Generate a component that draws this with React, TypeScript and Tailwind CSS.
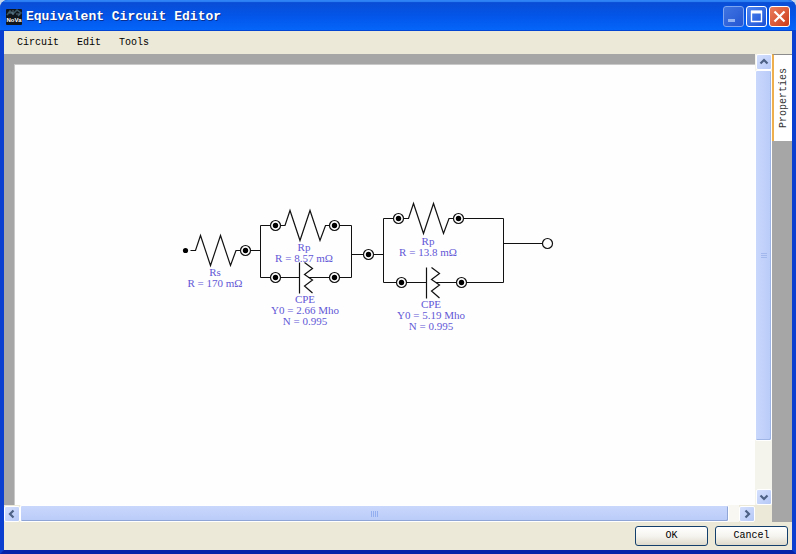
import type { ReactNode } from "react";

const ink = "#111111";

type Point = { x: number; y: number };

function Terminal({ x, y }: Point) {
  return (
    <g>
      <circle cx={x} cy={y} r={5} fill="#ffffff" stroke={ink} strokeWidth={1.2} />
      <circle cx={x} cy={y} r={2.7} fill="#000000" />
    </g>
  );
}

function Resistor({ x, y }: Point) {
  return (
    <path
      d={`M${x - 5} ${y}h5l5 -15l10 30l10 -30l10 30l5.5 -15h5`}
      fill="none"
      stroke={ink}
      strokeWidth={1.2}
    />
  );
}

function PhaseElement({ x, y }: Point) {
  return (
    <g fill="none" stroke={ink}>
      <path d={`M${x} ${y - 15}v31`} strokeWidth={1.2} />
      <path d={`M${x + 5} ${y - 15}l8 6l-8 6l8 5.5l-8 6l8 7`} strokeWidth={1.2} />
    </g>
  );
}

function Label({ x, y, lines }: Point & { lines: string[] }) {
  return (
    <text
      textAnchor="middle"
      fill="#6257d6"
      className="text-[11px] [font-family:'Liberation_Serif',serif]"
    >
      {lines.map((line, i) => (
        <tspan key={line} x={x} y={y + i * 11}>
          {line}
        </tspan>
      ))}
    </text>
  );
}

function CircuitDiagram() {
  return (
    <svg
      width="740"
      height="440"
      viewBox="15 65 740 440"
      role="img"
      aria-label="Equivalent circuit"
      className="block shrink-0"
    >
      <path
        d="M245.5 250.5H260.5M275.5 225.5H260.5V277.5H299.5M334.5 225.5H351.5V277.5H308M351.5 254.5H383.5M398.5 218.5H383.5V282.5H426.5M458.5 218.5H503.5V282.5H436M503.5 243.5H542"
        fill="none"
        stroke={ink}
        strokeWidth={1}
      />
      <circle cx={185.5} cy={250.5} r={2.6} fill="#000000" />
      <Label x={215} y={276} lines={["Rs", "R = 170 mΩ"]} />
      <Label x={304} y={251} lines={["Rp", "R = 8.57 mΩ"]} />
      <Label x={305} y={303} lines={["CPE", "Y0 = 2.66 Mho", "N = 0.995"]} />
      <Label x={428} y={245} lines={["Rp", "R = 13.8 mΩ"]} />
      <Label x={431} y={308} lines={["CPE", "Y0 = 5.19 Mho", "N = 0.995"]} />
      <Resistor x={195.5} y={250.5} />
      <Resistor x={285} y={225.5} />
      <Resistor x={408.5} y={218.5} />
      <PhaseElement x={299.5} y={277.5} />
      <PhaseElement x={426.5} y={282.5} />
      <Terminal x={245.5} y={250.5} />
      <Terminal x={275.5} y={225.5} />
      <Terminal x={334.5} y={225.5} />
      <Terminal x={275.5} y={277.5} />
      <Terminal x={334.5} y={277.5} />
      <Terminal x={368.5} y={254.5} />
      <Terminal x={398.5} y={218.5} />
      <Terminal x={458.5} y={218.5} />
      <Terminal x={401.5} y={282.5} />
      <Terminal x={461.5} y={282.5} />
      <circle cx={547.5} cy={243.5} r={5} fill="#ffffff" stroke={ink} strokeWidth={1.2} />
    </svg>
  );
}

function ArrowButton({ label, d }: { label: string; d: string }) {
  return (
    <button
      type="button"
      aria-label={label}
      className="flex size-4 shrink-0 items-center justify-center rounded-xs border border-white bg-linear-to-br from-[#d5e0fd] to-[#b5c8f6]"
    >
      <svg width="10" height="10" viewBox="0 0 10 10" fill="none" stroke="#4d6185" strokeWidth="2.2">
        <path d={d} />
      </svg>
    </button>
  );
}

function CaptionButton({ label, tone, children }: { label: string; tone: string; children: ReactNode }) {
  return (
    <button
      type="button"
      aria-label={label}
      className={`flex size-[21px] items-center justify-center rounded-[3px] border ${tone}`}
    >
      <svg width="19" height="19" viewBox="0 0 19 19" fill="none" stroke="#ffffff">
        {children}
      </svg>
    </button>
  );
}

function DialogButton({ children }: { children: ReactNode }) {
  return (
    <button
      type="button"
      className="h-5 w-[73px] rounded-[3px] border border-[#123f6c] bg-linear-to-b from-white via-[#f5f4ef] to-[#dedacb] text-center leading-4"
    >
      {children}
    </button>
  );
}

function AppIcon() {
  return (
    <svg width="16" height="16" viewBox="0 0 16 16" aria-hidden="true">
      <rect width="16" height="16" rx="1" fill="#10151b" />
      <path d="M1 6L4 2L7 5L11 1L15 4L12 7" fill="none" stroke="#3c5867" strokeWidth="1.5" />
      <path d="M3 4h4M10 5h4M7 1v5" stroke="#688698" strokeWidth="0.8" />
      <text
        x="8"
        y="13"
        textAnchor="middle"
        fill="#ffffff"
        className="text-[6px] font-bold [font-family:'Liberation_Sans',sans-serif]"
      >
        NoVa
      </text>
    </svg>
  );
}

export default function App() {
  return (
    <div className="h-screen bg-[#c5d5ea]">
      <div className="flex h-full flex-col overflow-hidden rounded-t-lg bg-[#0b3fd0] text-[10px] text-black [font-family:'Liberation_Mono',monospace]">
        <header className="flex h-[31px] shrink-0 items-center gap-1 bg-linear-to-b from-[#0a4bd2] via-[#0355e8] to-[#0566fb] pt-0.5 pr-1.5 pl-1.5 shadow-[inset_0_2px_1px_#2f83f5,inset_0_-1px_0_#0345d3]">
          <AppIcon />
          <h1 className="grow text-[13px] font-bold text-white [text-shadow:1px_1px_0_#0a2f8c]">
            Equivalent Circuit Editor
          </h1>
          <div className="flex gap-0.5">
            <CaptionButton label="Minimize" tone="border-[#7ea5f0] bg-linear-to-br from-[#3f74e2] to-[#2456d2]">
              <path d="M4 13.5h7" stroke="#91b2f3" strokeWidth="3" />
            </CaptionButton>
            <CaptionButton label="Maximize" tone="border-white bg-linear-to-br from-[#4f86f2] to-[#1b50d4]">
              <path d="M4.5 4.5h10v10h-10z" strokeWidth="1.4" />
              <path d="M4 5h11" strokeWidth="3" />
            </CaptionButton>
            <CaptionButton label="Close" tone="border-white bg-linear-to-br from-[#ea7c5c] to-[#cb3a16]">
              <path d="M4.5 4.5l10 10M14.5 4.5l-10 10" strokeWidth="2.2" />
            </CaptionButton>
          </div>
        </header>

        <div className="flex min-h-0 grow flex-col border-x-4 border-b-4 border-[#0b3fd0] border-b-[#0524a8] bg-[#ece9d8]">
          <nav className="flex h-[23px] shrink-0 items-center gap-[18px] px-[13px]">
            <button type="button">Circuit</button>
            <button type="button">Edit</button>
            <button type="button">Tools</button>
          </nav>

          <main className="flex min-h-0 grow bg-[#a6a6a6]">
            <div className="flex min-w-0 grow flex-col">
              <div className="flex min-h-0 grow">
                <div className="min-w-0 grow overflow-hidden pt-[10px] pl-[10px]">
                  <div className="h-full overflow-hidden border-t border-l border-[#c9c9c9] bg-[#fefefe]">
                    <CircuitDiagram />
                  </div>
                </div>
                <div className="flex w-[17px] shrink-0 flex-col items-center bg-[#f4f3ec]">
                  <ArrowButton label="Scroll up" d="M1.5 6.5L5 3L8.5 6.5" />
                  <div className="flex min-h-0 w-full grow flex-col pb-12">
                    <div className="flex grow flex-col items-center justify-center gap-px rounded-xs border border-white bg-linear-to-r from-[#c9d7fc] to-[#b9cbf8] shadow-[inset_-1px_-1px_0_#9fb5e6]">
                      <i className="h-px w-1.5 bg-[#a3b9ee]" />
                      <i className="h-px w-1.5 bg-[#a3b9ee]" />
                      <i className="h-px w-1.5 bg-[#a3b9ee]" />
                    </div>
                  </div>
                  <ArrowButton label="Scroll down" d="M1.5 3.5L5 7L8.5 3.5" />
                </div>
              </div>
              <div className="flex h-[17px] shrink-0 items-center bg-[#ece9d8] pr-[17px]">
                <ArrowButton label="Scroll left" d="M6.5 1.5L3 5L6.5 8.5" />
                <div className="flex h-full min-w-0 grow bg-[#f8f7f2] pr-[10px]">
                  <div className="flex grow items-center justify-center gap-px rounded-xs border border-white bg-linear-to-b from-[#c9d7fc] to-[#b9cbf8] shadow-[inset_-1px_-1px_0_#8fa5d6]">
                    <i className="h-1.5 w-px bg-[#93aff0]" />
                    <i className="h-1.5 w-px bg-[#93aff0]" />
                    <i className="h-1.5 w-px bg-[#93aff0]" />
                    <i className="h-1.5 w-px bg-[#93aff0]" />
                  </div>
                </div>
                <ArrowButton label="Scroll right" d="M3.5 1.5L7 5L3.5 8.5" />
              </div>
            </div>
            <aside className="w-5 shrink-0">
              <button
                type="button"
                className="flex h-[87px] w-full items-center justify-center border-t border-l-2 border-t-[#8c8c8c] border-l-[#eeb04e] bg-white text-[#333333]"
              >
                <span className="rotate-180 [writing-mode:vertical-rl]">Properties</span>
              </button>
            </aside>
          </main>

          <footer className="flex h-7 shrink-0 items-center justify-end gap-[7px] px-1">
            <DialogButton>OK</DialogButton>
            <DialogButton>Cancel</DialogButton>
          </footer>
        </div>
      </div>
    </div>
  );
}
